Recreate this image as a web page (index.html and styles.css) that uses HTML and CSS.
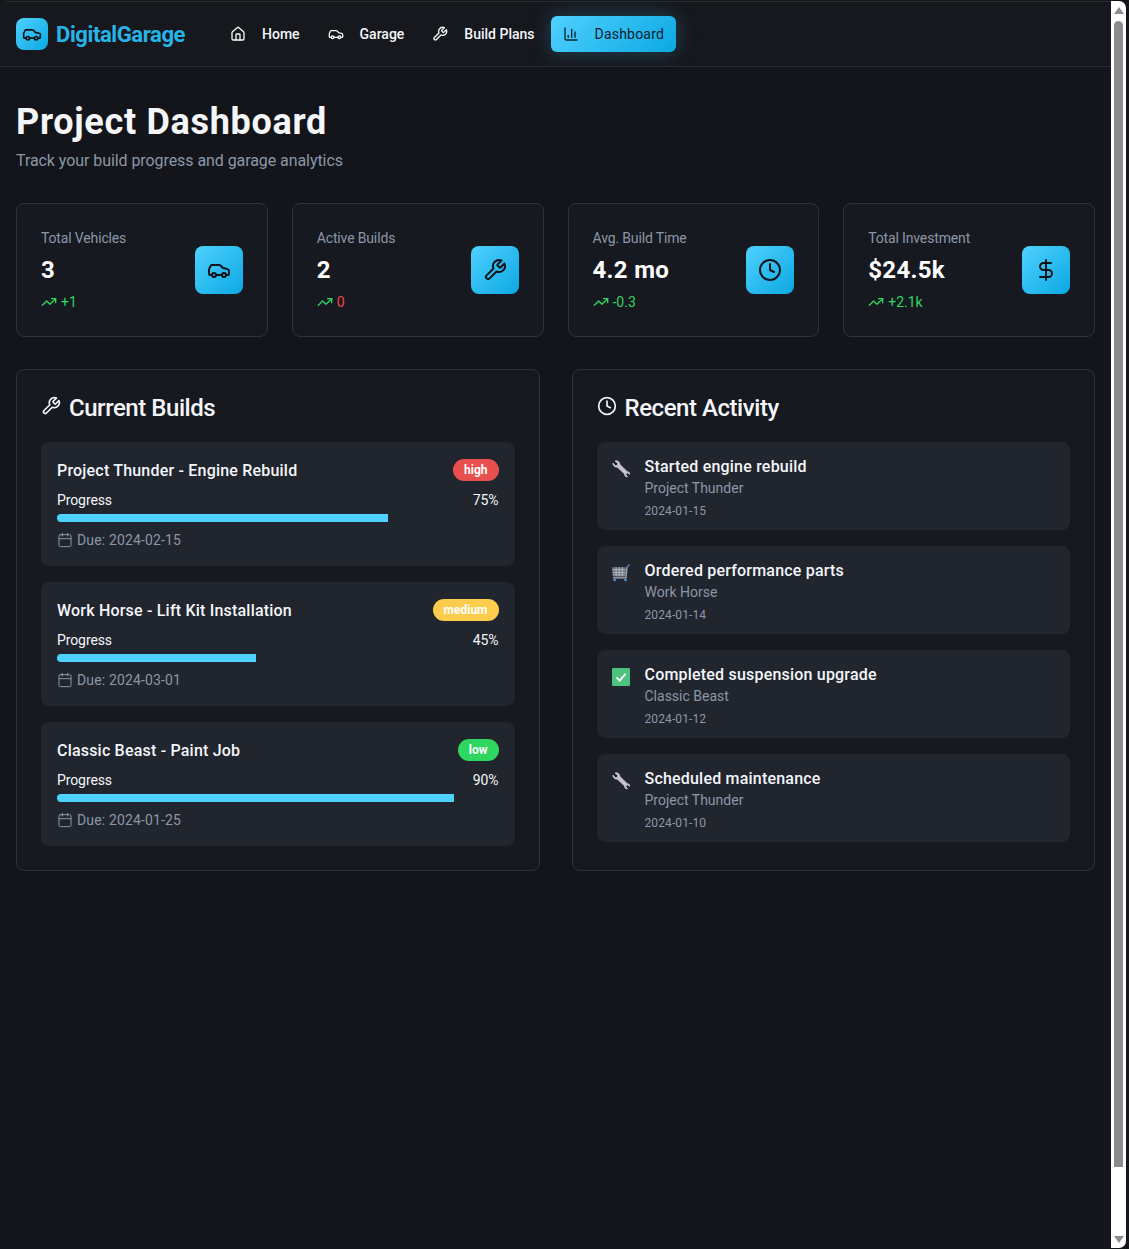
FILE: index.html
```html
<!DOCTYPE html>
<html lang="en">
  <head>
    <meta charset="UTF-8" />
    <title>DigitalGarage - Dashboard</title>
    <link rel="stylesheet" href="styles.css">
  </head>
  <body>
    <svg class="sprites" width="0" height="0">
      <symbol id="i-car" viewBox="0 0 24 24"><path d="M19 17h2c.6 0 1-.4 1-1v-3c0-.9-.7-1.7-1.5-1.9C18.7 10.6 16 10 16 10s-1.3-1.4-2.2-2.3c-.5-.4-1.1-.7-1.8-.7H5c-.6 0-1.1.4-1.4.9l-1.4 2.9A3.7 3.7 0 0 0 2 12v4c0 .6.4 1 1 1h2"/><circle cx="7" cy="17" r="2"/><path d="M9 17h6"/><circle cx="17" cy="17" r="2"/></symbol>
      <symbol id="i-home" viewBox="0 0 24 24"><path d="M15 21v-8a1 1 0 0 0-1-1h-4a1 1 0 0 0-1 1v8"/><path d="M3 10a2 2 0 0 1 .709-1.528l7-5.999a2 2 0 0 1 2.582 0l7 5.999A2 2 0 0 1 21 10v9a2 2 0 0 1-2 2H5a2 2 0 0 1-2-2z"/></symbol>
      <symbol id="i-wrench" viewBox="0 0 24 24"><path d="M14.7 6.3a1 1 0 0 0 0 1.4l1.6 1.6a1 1 0 0 0 1.4 0l3.77-3.77a6 6 0 0 1-7.94 7.94l-6.91 6.91a2.12 2.12 0 0 1-3-3l6.91-6.91a6 6 0 0 1 7.94-7.94l-3.76 3.76z"/></symbol>
      <symbol id="i-chart" viewBox="0 0 24 24"><path d="M3 3v16a2 2 0 0 0 2 2h16"/><path d="M18 17V9"/><path d="M13 17V5"/><path d="M8 17v-3"/></symbol>
      <symbol id="i-clock" viewBox="0 0 24 24"><circle cx="12" cy="12" r="10"/><polyline points="12 6 12 12 16 14"/></symbol>
      <symbol id="i-dollar" viewBox="0 0 24 24"><path d="M12 2v20"/><path d="M17 5H9.5a3.5 3.5 0 0 0 0 7h5a3.5 3.5 0 0 1 0 7H6"/></symbol>
      <symbol id="i-trend" viewBox="0 0 24 24"><polyline points="22 7 13.5 15.5 8.5 10.5 2 17"/><polyline points="16 7 22 7 22 13"/></symbol>
      <symbol id="i-calendar" viewBox="0 0 24 24"><path d="M8 2v4"/><path d="M16 2v4"/><rect x="3" y="4" width="18" height="18" rx="2"/><path d="M3 10h18"/></symbol>
      <symbol id="e-wrench" viewBox="0 0 20 20"><path class="e-fill" d="M1 3.500 4 6.500l2-.5.500-2L3.500 1C6 .3 8.800 2 8.800 5L17 13c1.800-.2 3 1.300 2.700 3l-2.200-1.700-1.700.8-.4 1.600 2 2c-2 .5-3.800-1.200-3.400-3.200L6 8C3.300 8.200.8 6.200 1 3.500z"/></symbol>
      <symbol id="e-cart" viewBox="0 0 20 20"><path class="e-cart" d="M0 3.500h15.500l-.8 10.500H1z"/><path class="e-cart-line" d="M.3 6.500h15M.6 9.500h14.500M.9 12h14M4.500 3.500l.3 10.500M8 3.500V14M11.500 3.500l-.3 10.500"/><path class="e-cart-frame" d="M16.800 3 15.500 15.500H1"/><path class="e-cart-handle" d="M19.500.5 16.800 3"/><circle class="e-cart-wheel" cx="3" cy="17.800" r="1.600"/><circle class="e-cart-wheel" cx="15" cy="17.800" r="1.600"/></symbol>
      <symbol id="e-check" viewBox="0 0 20 20"><rect class="e-check-box" width="20" height="20" rx="1.500"/><path class="e-check-mark" d="M5 10.500l3.500 3.500L15 6.500"/></symbol>
    </svg>

    <div class="window">
      <div class="app">
        <header class="topbar">
          <a class="brand">
            <span class="brand-mark"><svg class="icon icon-20"><use href="#i-car"/></svg></span>
            <span class="brand-name">DigitalGarage</span>
          </a>
          <nav class="nav">
            <a class="nav-link"><svg class="icon icon-16"><use href="#i-home"/></svg>Home</a>
            <a class="nav-link"><svg class="icon icon-16"><use href="#i-car"/></svg>Garage</a>
            <a class="nav-link"><svg class="icon icon-16"><use href="#i-wrench"/></svg>Build Plans</a>
            <a class="nav-link active"><svg class="icon icon-16"><use href="#i-chart"/></svg>Dashboard</a>
          </nav>
        </header>

        <main class="content">
          <h1>Project Dashboard</h1>
          <p class="subtitle">Track your build progress and garage analytics</p>

          <section class="stats">
            <div class="stat-card">
              <div>
                <div class="stat-label">Total Vehicles</div>
                <div class="stat-value">3</div>
                <div class="stat-trend"><svg class="icon icon-16"><use href="#i-trend"/></svg>+1</div>
              </div>
              <div class="stat-icon"><svg class="icon icon-24"><use href="#i-car"/></svg></div>
            </div>
            <div class="stat-card">
              <div>
                <div class="stat-label">Active Builds</div>
                <div class="stat-value">2</div>
                <div class="stat-trend"><svg class="icon icon-16"><use href="#i-trend"/></svg><span class="red">0</span></div>
              </div>
              <div class="stat-icon"><svg class="icon icon-24"><use href="#i-wrench"/></svg></div>
            </div>
            <div class="stat-card">
              <div>
                <div class="stat-label">Avg. Build Time</div>
                <div class="stat-value">4.2 mo</div>
                <div class="stat-trend"><svg class="icon icon-16"><use href="#i-trend"/></svg>-0.3</div>
              </div>
              <div class="stat-icon"><svg class="icon icon-24"><use href="#i-clock"/></svg></div>
            </div>
            <div class="stat-card">
              <div>
                <div class="stat-label">Total Investment</div>
                <div class="stat-value">$24.5k</div>
                <div class="stat-trend"><svg class="icon icon-16"><use href="#i-trend"/></svg>+2.1k</div>
              </div>
              <div class="stat-icon"><svg class="icon icon-24"><use href="#i-dollar"/></svg></div>
            </div>
          </section>

          <section class="panels">
            <div class="panel">
              <h2><svg class="icon icon-20"><use href="#i-wrench"/></svg>Current Builds</h2>
              <div class="list">
                <div class="build">
                  <div class="build-head">
                    <h3>Project Thunder - Engine Rebuild</h3>
                    <span class="badge high">high</span>
                  </div>
                  <div class="progress-row"><span>Progress</span><span>75%</span></div>
                  <div class="bar"><div class="bar-fill" style="width: 75%"></div></div>
                  <div class="due"><svg class="icon icon-16"><use href="#i-calendar"/></svg>Due: 2024-02-15</div>
                </div>
                <div class="build">
                  <div class="build-head">
                    <h3>Work Horse - Lift Kit Installation</h3>
                    <span class="badge medium">medium</span>
                  </div>
                  <div class="progress-row"><span>Progress</span><span>45%</span></div>
                  <div class="bar"><div class="bar-fill" style="width: 45%"></div></div>
                  <div class="due"><svg class="icon icon-16"><use href="#i-calendar"/></svg>Due: 2024-03-01</div>
                </div>
                <div class="build">
                  <div class="build-head">
                    <h3>Classic Beast - Paint Job</h3>
                    <span class="badge low">low</span>
                  </div>
                  <div class="progress-row"><span>Progress</span><span>90%</span></div>
                  <div class="bar"><div class="bar-fill" style="width: 90%"></div></div>
                  <div class="due"><svg class="icon icon-16"><use href="#i-calendar"/></svg>Due: 2024-01-25</div>
                </div>
              </div>
            </div>

            <div class="panel">
              <h2><svg class="icon icon-20"><use href="#i-clock"/></svg>Recent Activity</h2>
              <div class="list">
                <div class="activity">
                  <svg class="emoji"><use href="#e-wrench"/></svg>
                  <div>
                    <h3>Started engine rebuild</h3>
                    <div class="activity-sub">Project Thunder</div>
                    <div class="activity-date">2024-01-15</div>
                  </div>
                </div>
                <div class="activity">
                  <svg class="emoji"><use href="#e-cart"/></svg>
                  <div>
                    <h3>Ordered performance parts</h3>
                    <div class="activity-sub">Work Horse</div>
                    <div class="activity-date">2024-01-14</div>
                  </div>
                </div>
                <div class="activity">
                  <svg class="emoji"><use href="#e-check"/></svg>
                  <div>
                    <h3>Completed suspension upgrade</h3>
                    <div class="activity-sub">Classic Beast</div>
                    <div class="activity-date">2024-01-12</div>
                  </div>
                </div>
                <div class="activity">
                  <svg class="emoji"><use href="#e-wrench"/></svg>
                  <div>
                    <h3>Scheduled maintenance</h3>
                    <div class="activity-sub">Project Thunder</div>
                    <div class="activity-date">2024-01-10</div>
                  </div>
                </div>
              </div>
            </div>
          </section>
        </main>
      </div>

      <div class="scrollbar">
        <span class="arrow-up"></span>
        <div class="thumb"></div>
        <span class="arrow-down"></span>
      </div>
    </div>
  </body>
</html>
```

FILE: styles.css
```css
html,
body {
  height: 100%;
}
body {
  margin: 0;
  background-color: #2a2a2c;
  font-family: Roboto, "Noto Sans", sans-serif;
  color: #f4f6fa;
  overflow: hidden;
}
h1,
h2,
h3,
p {
  margin: 0;
}
.sprites {
  display: block;
  height: 0;
}
.icon {
  fill: none;
  stroke: currentColor;
  stroke-width: 2;
  stroke-linecap: round;
  stroke-linejoin: round;
  flex-shrink: 0;
}
.icon-16 {
  width: 16px;
  height: 16px;
}
.icon-20 {
  width: 20px;
  height: 20px;
}
.icon-24 {
  width: 24px;
  height: 24px;
}

.window {
  display: flex;
  height: 1249px;
  background-color: #131519;
}
.app {
  width: 1111px;
  height: 1248px;
  margin-top: 1px;
  border-top: 1px solid #2b2c30;
  border-top-left-radius: 8px;
  box-sizing: border-box;
  background-color: #13151a;
}

.topbar {
  display: flex;
  align-items: center;
  gap: 32px;
  height: 64px;
  padding: 0 16px;
  background-color: #16181e;
  border-bottom: 1px solid #2a2d37;
}
.brand {
  display: flex;
  align-items: center;
  gap: 8px;
}
.brand-mark {
  display: flex;
  align-items: center;
  justify-content: center;
  width: 32px;
  height: 32px;
  border-radius: 8px;
  background: linear-gradient(135deg, #4fd1ff, #0ca8e2);
  color: #11141a;
}
.brand-name {
  width: 130px;
  font-size: 22px;
  font-weight: 700;
  letter-spacing: -0.4px;
  white-space: nowrap;
  color: #27b4e8;
}
.nav {
  display: flex;
  gap: 4px;
}
.nav-link {
  display: flex;
  align-items: center;
  gap: 16px;
  height: 36px;
  padding: 0 12px;
  border-radius: 6px;
  font-size: 14px;
  font-weight: 500;
  color: #f4f6fa;
}
.nav-link.active {
  font-weight: 400;
  letter-spacing: 0.2px;
  color: #10202c;
  background: linear-gradient(135deg, #4fd1ff, #0ca8e2);
  box-shadow: 0 0 20px rgba(79, 209, 255, 0.25);
}

.content {
  padding: 33px 16px 32px;
}
h1 {
  font-size: 36px;
  line-height: 44px;
  font-weight: 700;
  letter-spacing: 0.7px;
}
.subtitle {
  margin-top: 5px;
  font-size: 16px;
  line-height: 24px;
  letter-spacing: -0.07px;
  color: #8b97a7;
}

.stats {
  display: grid;
  grid-template-columns: repeat(4, 1fr);
  gap: 24px;
  margin-top: 30px;
}
.stat-card {
  display: flex;
  align-items: center;
  justify-content: space-between;
  padding: 24px;
  border: 1px solid #2c333b;
  border-radius: 8px;
  background-color: #171920;
}
.stat-label {
  font-size: 14px;
  line-height: 20px;
  letter-spacing: -0.15px;
  color: #8b97a7;
}
.stat-value {
  margin-top: 4px;
  font-size: 24px;
  line-height: 36px;
  font-weight: 700;
  letter-spacing: 0.3px;
  color: #fff;
}
.stat-trend {
  display: flex;
  align-items: center;
  gap: 4px;
  margin-top: 4px;
  font-size: 14px;
  line-height: 20px;
  color: #2fd65f;
}
.red {
  color: #ef4444;
}
.stat-icon {
  display: flex;
  align-items: center;
  justify-content: center;
  width: 48px;
  height: 48px;
  border-radius: 8px;
  background: linear-gradient(135deg, #4fd1ff, #0ca8e2);
  color: #11141a;
}

.panels {
  display: grid;
  grid-template-columns: 1fr 1fr;
  gap: 32px;
  margin-top: 32px;
}
.panel {
  padding: 24px;
  border: 1px solid #2c333b;
  border-radius: 8px;
  background-color: #171920;
}
h2 {
  display: flex;
  align-items: center;
  gap: 8px;
  height: 32px;
  padding-bottom: 4px;
  box-sizing: border-box;
  margin-bottom: 16px;
  font-size: 24px;
  font-weight: 500;
  letter-spacing: -0.45px;
  color: #f4f6fa;
}
h2 .icon {
  margin-bottom: 4px;
}
.list {
  display: flex;
  flex-direction: column;
  gap: 16px;
}
h3 {
  font-size: 16px;
  line-height: 24px;
  font-weight: 500;
  letter-spacing: 0.2px;
}

.build {
  padding: 16px;
  border-radius: 8px;
  background-color: #20252e;
}
.build-head {
  display: flex;
  align-items: center;
  justify-content: space-between;
  height: 24px;
  margin-bottom: 8px;
}
.build-head h3 {
  margin-top: 2px;
}
.badge {
  padding: 0 11px;
  border-radius: 11px;
  font-size: 12px;
  line-height: 22px;
  font-weight: 700;
  color: #fff;
}
.high {
  background-color: #e85050;
}
.medium {
  background-color: #fccc4d;
}
.low {
  background-color: #2fd65f;
}
.progress-row {
  display: flex;
  justify-content: space-between;
  font-size: 14px;
  line-height: 20px;
  letter-spacing: -0.1px;
  margin-bottom: 4px;
}
.bar {
  height: 8px;
  border-radius: 4px;
  overflow: hidden;
}
.bar-fill {
  height: 100%;
  background-color: #4fd1ff;
}
.due {
  display: flex;
  align-items: center;
  gap: 4px;
  margin-top: 8px;
  font-size: 14px;
  line-height: 20px;
  letter-spacing: 0.15px;
  color: #8b97a7;
}
.due .icon {
  stroke-width: 1.5;
}

.activity {
  display: flex;
  gap: 15px;
  padding: 13px 16px 11px 15px;
  border-radius: 8px;
  background-color: #20252e;
}
.emoji {
  width: 18px;
  height: 18px;
  margin-top: 5px;
  flex-shrink: 0;
}
.activity-sub {
  margin-top: -1px;
  font-size: 14px;
  line-height: 20px;
  color: #8b97a7;
}
.activity-date {
  margin-top: 5px;
  font-size: 12px;
  line-height: 16px;
  letter-spacing: 0.1px;
  color: #8b97a7;
}
.e-fill {
  fill: #c9c3d6;
  stroke: #c9c3d6;
  stroke-width: 0.9;
}
.e-cart {
  fill: #69717c;
}
.e-cart-line {
  fill: none;
  stroke: #c3c8cf;
  stroke-width: 0.8;
}
.e-cart-frame {
  fill: none;
  stroke: #aab1ba;
  stroke-width: 1.4;
}
.e-cart-handle {
  fill: none;
  stroke: #4f86c6;
  stroke-width: 1.4;
}
.e-cart-wheel {
  fill: #4f86c6;
}
.e-check-box {
  fill: #4cc47f;
}
.e-check-mark {
  fill: none;
  stroke: #fff;
  stroke-width: 2;
}

.scrollbar {
  display: flex;
  flex-direction: column;
  align-items: center;
  width: 15px;
  height: 1247px;
  margin-top: 1px;
  padding: 6px 0 5px;
  box-sizing: border-box;
  background-color: #fff;
  border-radius: 0 7px 7px 0;
}
.thumb {
  flex: 1;
  width: 9px;
  margin: 7px 0 69px;
  border-radius: 5px 5px 0 0;
  background-color: #8c8c8c;
}
.arrow-up,
.arrow-down {
  width: 0;
  height: 0;
  border-left: 5px solid transparent;
  border-right: 5px solid transparent;
}
.arrow-up {
  border-bottom: 7px solid #8c8c8c;
}
.arrow-down {
  border-top: 7px solid #8c8c8c;
}
```
